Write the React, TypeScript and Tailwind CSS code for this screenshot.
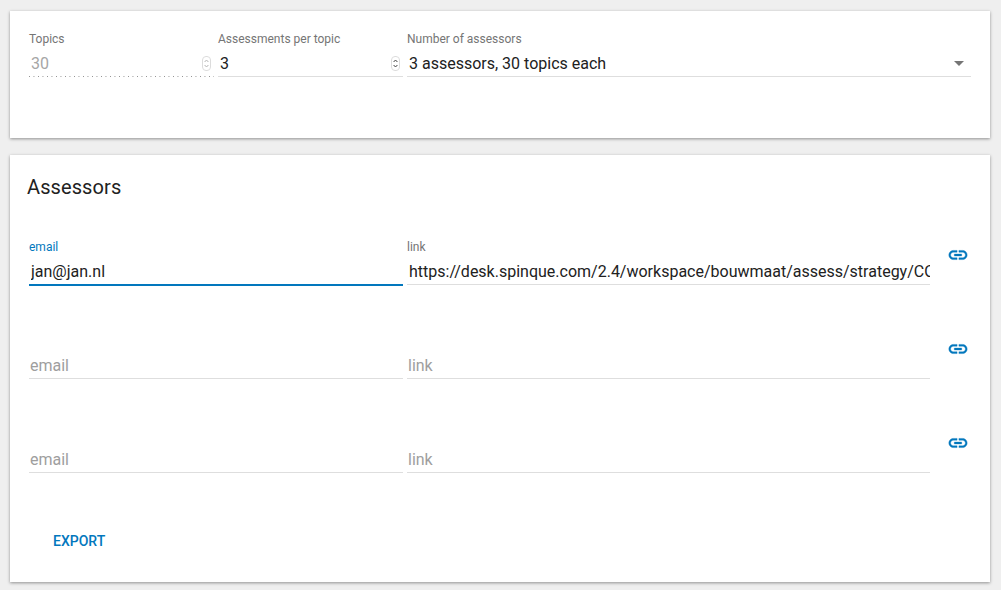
import React from "react";

function Spinner({ dim }: { dim?: boolean }) {
  const c = dim ? "#b5b5b5" : "#444";
  return (
    <svg width="9" height="15" viewBox="0 0 9 15" className="mr-[3px] mb-[2px] shrink-0">
      <rect x="0.5" y="0.5" width="8" height="14" rx="3.5" fill="#fff" stroke="#dcdcdc" />
      <path d="M2.6 6 L4.5 4 L6.4 6" fill="none" stroke={c} strokeWidth="1" />
      <path d="M2.6 9 L4.5 11 L6.4 9" fill="none" stroke={c} strokeWidth="1" />
    </svg>
  );
}

function LinkIcon() {
  return (
    <svg width="22" height="22" viewBox="0 0 24 24" fill="#0277bd" stroke="#0277bd" strokeWidth="0.4" className="shrink-0">
      <path d="M3.9 12c0-1.71 1.39-3.1 3.1-3.1h4V7H7c-2.76 0-5 2.24-5 5s2.24 5 5 5h4v-1.9H7c-1.71 0-3.1-1.39-3.1-3.1zM8 13h8v-2H8v2zm9-6h-4v1.9h4c1.71 0 3.1 1.39 3.1 3.1s-1.39 3.1-3.1 3.1h-4V17h4c2.76 0 5-2.24 5-5s-2.24-5-5-5z" />
    </svg>
  );
}

type FieldProps = {
  label?: string;
  value?: string;
  placeholder?: string;
  className?: string;
  focused?: boolean;
  disabled?: boolean;
  spinner?: boolean;
  caret?: boolean;
};

function Field({ label, value, placeholder, className, focused, disabled, spinner, caret }: FieldProps) {
  const line = disabled
    ? "h-px bg-[linear-gradient(to_right,#8f8f8f_1px,transparent_1px)] bg-[length:4.5px_1px]"
    : focused
      ? "h-[2px] bg-[#0277bd]"
      : "h-px bg-[#dedede]";
  return (
    <div className={className}>
      <div className={`h-[14px] text-[12px] leading-[14px] ${focused ? "text-[#0277bd]" : "text-[#757575]"}`}>
        {label}
      </div>
      <div className="mt-[6px] flex h-[24px] items-center">
        <input
          readOnly
          value={value ?? ""}
          placeholder={placeholder}
          className={`w-full min-w-0 flex-1 bg-transparent text-[16px] leading-[24px] outline-none placeholder:text-[#9e9e9e] ${value ? "pl-[2px]" : "pl-[1px]"} ${disabled ? "text-[#a6a6a6]" : "text-[#212121]"}`}
        />
        {spinner && <Spinner dim={disabled} />}
        {caret && (
          <svg width="10" height="5" viewBox="0 0 10 5" className="mr-[7px] mb-[2px] shrink-0">
            <path d="M0 0h10L5 5z" fill="#757575" />
          </svg>
        )}
      </div>
      <div className={line} />
    </div>
  );
}

function Row({ email, link, label, focused }: { email?: string; link?: string; label?: boolean; focused?: boolean }) {
  return (
    <div className="flex h-[45px] items-start gap-1">
      <Field
        className="w-[374px] shrink-0"
        label={label ? "email" : ""}
        value={email}
        placeholder="email"
        focused={focused}
      />
      <Field className="w-[523px] shrink-0" label={label ? "link" : ""} value={link} placeholder="link" />
      <div className="ml-[13px] mt-[4px]">
        <LinkIcon />
      </div>
    </div>
  );
}

export default function App() {
  return (
    <div
      className="h-[590px] w-[1001px] overflow-hidden bg-[#efefef] pl-[10px] pr-[11px] pt-[11px]"
      style={{ fontFamily: "Roboto, sans-serif" }}
    >
      <section className="h-[127px] bg-white px-[19px] pt-[21px] shadow-[0_1px_3px_rgba(0,0,0,0.4)]">
        <div className="flex items-start gap-1">
          <Field className="w-[185px] shrink-0" label="Topics" value="30" disabled spinner />
          <Field className="w-[185px] shrink-0" label="Assessments per topic" value="3" spinner />
          <Field className="w-[564px] shrink-0" label="Number of assessors" value="3 assessors, 30 topics each" caret />
        </div>
      </section>

      <section className="mt-[17px] h-[427px] bg-white px-[19px] pt-[20px] shadow-[0_1px_3px_rgba(0,0,0,0.4)]">
        <h2 className="-ml-[2px] text-[20px] leading-[24px] tracking-[0.1px] text-[#212121]">Assessors</h2>
        <div className="mt-[41px] flex flex-col gap-[49px]">
          <Row
            label
            focused
            email="jan@jan.nl"
            link="https://desk.spinque.com/2.4/workspace/bouwmaat/assess/strategy/CQ5sample/topics/assessor"
          />
          <Row />
          <Row />
        </div>
        <button className="mt-[58px] ml-[24px] text-[14px] font-medium leading-[20px] text-[#0277bd]">EXPORT</button>
      </section>
    </div>
  );
}
